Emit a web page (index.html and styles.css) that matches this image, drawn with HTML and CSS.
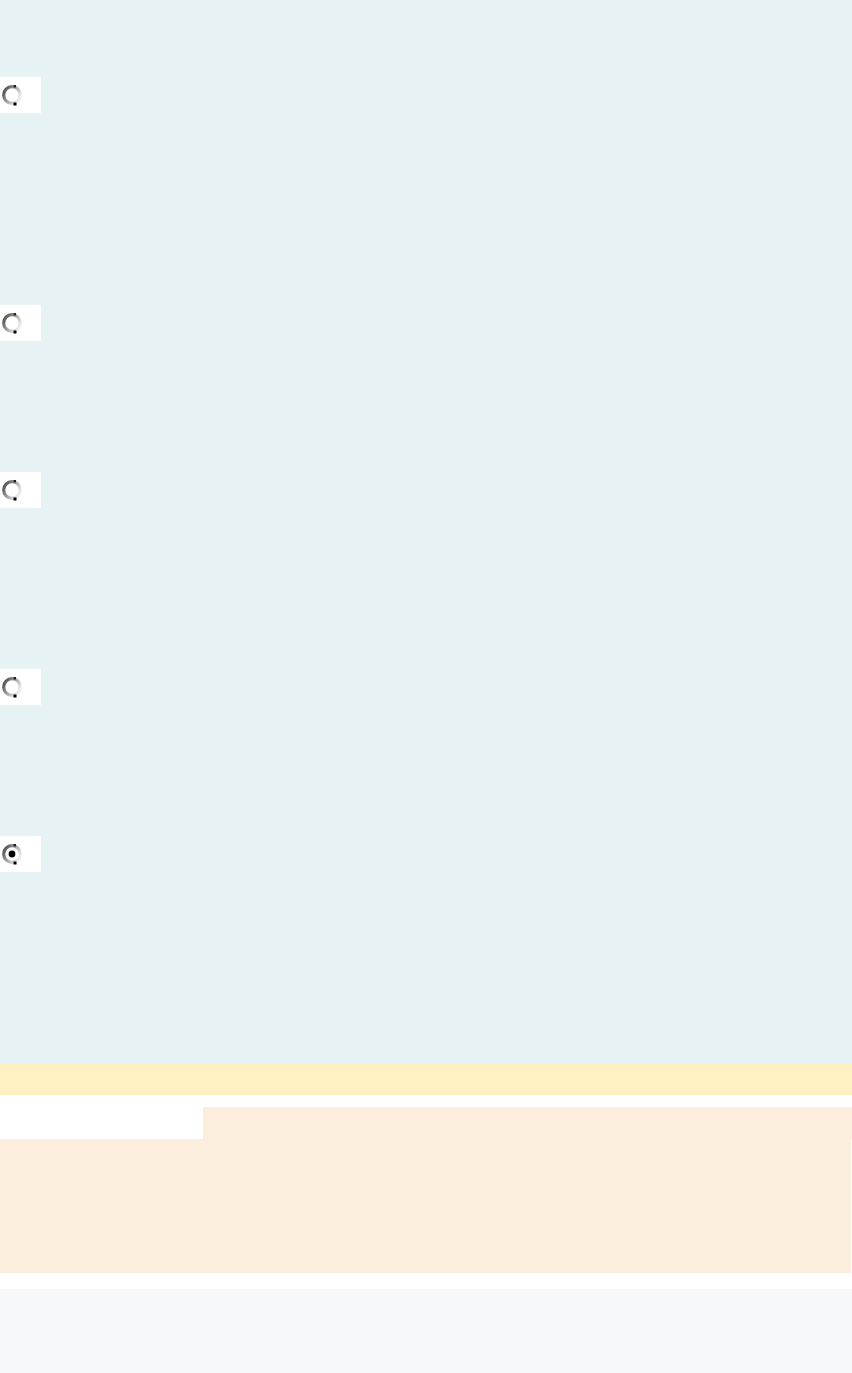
FILE: index.html
```html
<!DOCTYPE html>
<html lang="en">
<head>
<meta charset="utf-8">
<title>Options</title>
<link rel="stylesheet" href="styles.css">
</head>
<body>
<main class="page">
  <section class="choices">
    <div class="option option-tall">
      <label class="radio-box">
        <svg class="radio" width="24" height="24" viewBox="0 0 24 24" aria-hidden="true">
          <defs>
            <linearGradient id="rg1" x1="0" y1="0" x2="1" y2="0.6">
              <stop offset="0" stop-color="#3f3f3f"/>
              <stop offset="0.5" stop-color="#9c9c9c"/>
              <stop offset="1" stop-color="#ececec"/>
            </linearGradient>
          </defs>
          <circle cx="12" cy="12" r="8.3" fill="#fff" stroke="url(#rg1)" stroke-width="3.2"/>
          <rect x="13.5" y="2" width="2.5" height="2.5" fill="#222"/>
          <rect x="13.5" y="19.5" width="3" height="3" fill="#000"/>
        </svg>
      </label>
    </div>
    <div class="option option-mid">
      <label class="radio-box">
        <svg class="radio" width="24" height="24" viewBox="0 0 24 24" aria-hidden="true">
          <circle cx="12" cy="12" r="8.3" fill="#fff" stroke="url(#rg1)" stroke-width="3.2"/>
          <rect x="13.5" y="2" width="2.5" height="2.5" fill="#222"/>
          <rect x="13.5" y="19.5" width="3" height="3" fill="#000"/>
        </svg>
      </label>
    </div>
    <div class="option option-wide">
      <label class="radio-box">
        <svg class="radio" width="24" height="24" viewBox="0 0 24 24" aria-hidden="true">
          <circle cx="12" cy="12" r="8.3" fill="#fff" stroke="url(#rg1)" stroke-width="3.2"/>
          <rect x="13.5" y="2" width="2.5" height="2.5" fill="#222"/>
          <rect x="13.5" y="19.5" width="3" height="3" fill="#000"/>
        </svg>
      </label>
    </div>
    <div class="option option-mid">
      <label class="radio-box">
        <svg class="radio" width="24" height="24" viewBox="0 0 24 24" aria-hidden="true">
          <circle cx="12" cy="12" r="8.3" fill="#fff" stroke="url(#rg1)" stroke-width="3.2"/>
          <rect x="13.5" y="2" width="2.5" height="2.5" fill="#222"/>
          <rect x="13.5" y="19.5" width="3" height="3" fill="#000"/>
        </svg>
      </label>
    </div>
    <div class="option option-tall">
      <label class="radio-box">
        <svg class="radio" width="24" height="24" viewBox="0 0 24 24" aria-hidden="true">
          <circle cx="12" cy="12" r="8.3" fill="#fff" stroke="url(#rg1)" stroke-width="3.2"/>
          <circle cx="12" cy="12" r="3.4" fill="#000"/>
          <rect x="13.5" y="2" width="2.5" height="2.5" fill="#222"/>
          <rect x="13.5" y="19.5" width="3" height="3" fill="#000"/>
        </svg>
      </label>
    </div>
  </section>
  <div class="notice"></div>
  <section class="panel">
    <div class="panel-tabs">
      <div class="tab-spacer"></div>
      <div class="tab-active"></div>
    </div>
    <div class="panel-body"></div>
  </section>
  <footer class="footer"></footer>
</main>
</body>
</html>
```
FILE: styles.css
```css
html, body {
  margin: 0;
  padding: 0;
  background: #ffffff;
  font-family: "Liberation Sans", Arial, sans-serif;
}

.page {
  display: flex;
  flex-direction: column;
  width: 852px;
}

.choices {
  display: flex;
  flex-direction: column;
  background: #e7f2f4;
  padding-top: 77px;
}

.option {
  display: flex;
  align-items: flex-start;
}

.option-tall { height: 228px; }
.option-mid { height: 167px; }
.option-wide { height: 197px; }

.radio-box {
  display: flex;
  align-items: center;
  width: 41px;
  height: 36px;
  background: #ffffff;
}

.radio {
  display: block;
}

.notice {
  height: 31px;
  background: #fff1c1;
  margin-bottom: 12px;
}

.panel {
  display: flex;
  flex-direction: column;
}

.panel-tabs {
  display: flex;
  height: 32px;
}

.tab-spacer {
  width: 203px;
  background: #ffffff;
}

.tab-active {
  flex: 1;
  background: #fbeedc;
}

.panel-body {
  height: 134px;
  width: 851px;
  background: #fbeedc;
}

.footer {
  margin-top: 16px;
  height: 84px;
  background: #f7f8fa;
}
```
